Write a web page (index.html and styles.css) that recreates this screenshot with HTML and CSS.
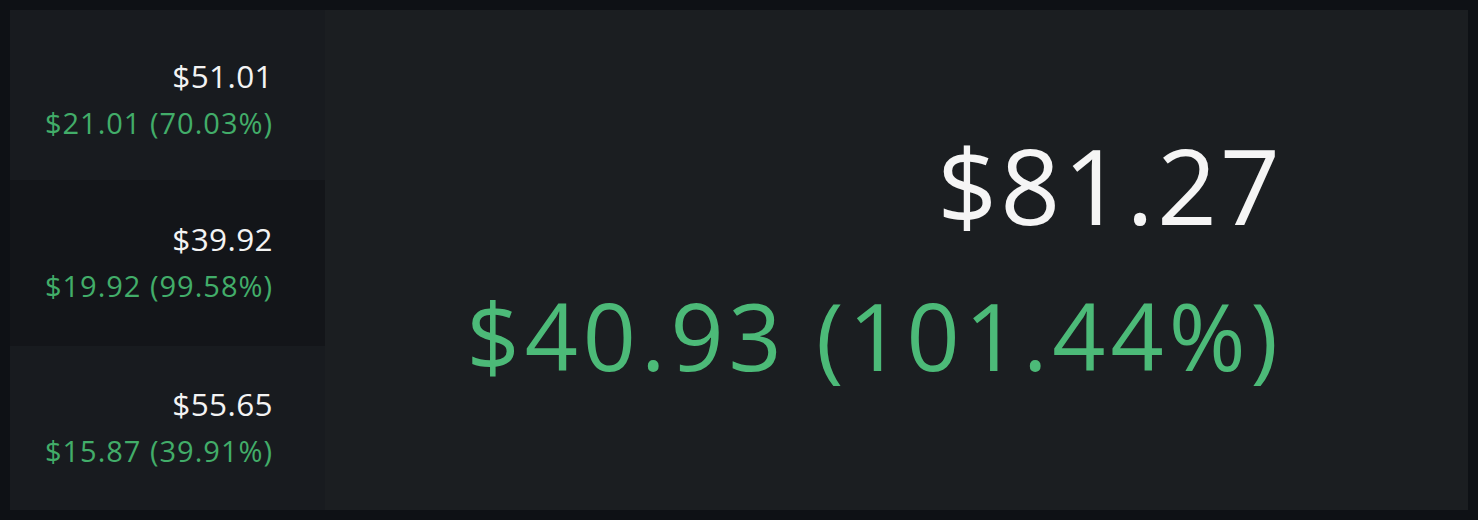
FILE: index.html
```html
<!DOCTYPE html>
<html lang="en">
<head>
    <meta charset="UTF-8">
    <meta name="viewport" content="width=device-width, initial-scale=1.0">
    <title>Portfolio</title>
    <link rel="stylesheet" href="styles.css">
</head>
<body>
    <div class="card">
        <div class="holdings">
            <div class="holding first">
                <div class="price">$51.01</div>
                <div class="change">$21.01 (70.03%)</div>
            </div>
            <div class="holding active">
                <div class="price">$39.92</div>
                <div class="change">$19.92 (99.58%)</div>
            </div>
            <div class="holding last">
                <div class="price">$55.65</div>
                <div class="change">$15.87 (39.91%)</div>
            </div>
        </div>
        <div class="summary">
            <div class="total">$81.27</div>
            <div class="total-change">$40.93 (101.44%)</div>
        </div>
    </div>
</body>
</html>
```
FILE: styles.css
```css
body {
    margin: 0;
    padding: 10px;
    background: #0e1115;
    font-family: "Open Sans", "Noto Sans", sans-serif;
}
.card {
    display: flex;
    height: 500px;
    background: #1b1e21;
}
.holdings {
    width: 315px;
    display: flex;
    flex-direction: column;
}
.holding {
    flex: 0 0 166px;
    box-sizing: border-box;
    display: flex;
    flex-direction: column;
    justify-content: center;
    align-items: flex-end;
    padding-right: 52px;
    background: #181b1f;
}
.holding.first {
    flex-basis: 170px;
    padding-top: 9px;
}
.holding.last {
    flex: 1;
}
.holding.active {
    background: #131519;
}
.price {
    color: #f3f3f3;
    font-size: 31.5px;
    line-height: 46px;
    letter-spacing: 0.4px;
}
.change {
    color: #42ad69;
    font-size: 29px;
    line-height: 48px;
    letter-spacing: 1px;
}
.summary {
    flex: 1;
    display: flex;
    flex-direction: column;
    justify-content: center;
    align-items: flex-end;
    padding-right: 185px;
}
.total {
    color: #f5f5f5;
    font-size: 105px;
    line-height: 150px;
    letter-spacing: 3px;
}
.total-change {
    color: #4cba78;
    font-size: 93px;
    line-height: 150px;
    letter-spacing: 5px;
}
```
